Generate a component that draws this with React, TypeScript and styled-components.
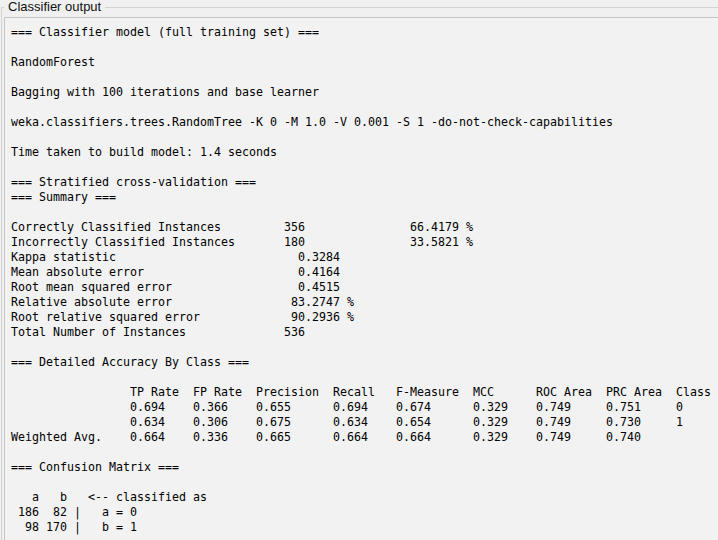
import React, { FC } from "react";
import styled, { createGlobalStyle } from "styled-components";

const GlobalStyle = createGlobalStyle`
  html, body {
    margin: 0;
    padding: 0;
    height: 540px;
    background: #f0f0f0;
    overflow: hidden;
  }
`;

const lines: string[] = [
  "=== Classifier model (full training set) ===",
  "",
  "RandomForest",
  "",
  "Bagging with 100 iterations and base learner",
  "",
  "weka.classifiers.trees.RandomTree -K 0 -M 1.0 -V 0.001 -S 1 -do-not-check-capabilities",
  "",
  "Time taken to build model: 1.4 seconds",
  "",
  "=== Stratified cross-validation ===",
  "=== Summary ===",
  "",
  "Correctly Classified Instances         356               66.4179 %",
  "Incorrectly Classified Instances       180               33.5821 %",
  "Kappa statistic                          0.3284",
  "Mean absolute error                      0.4164",
  "Root mean squared error                  0.4515",
  "Relative absolute error                 83.2747 %",
  "Root relative squared error             90.2936 %",
  "Total Number of Instances              536",
  "",
  "=== Detailed Accuracy By Class ===",
  "",
  "                 TP Rate  FP Rate  Precision  Recall   F-Measure  MCC      ROC Area  PRC Area  Class",
  "                 0.694    0.366    0.655      0.694    0.674      0.329    0.749     0.751     0",
  "                 0.634    0.306    0.675      0.634    0.654      0.329    0.749     0.730     1",
  "Weighted Avg.    0.664    0.336    0.665      0.664    0.664      0.329    0.749     0.740",
  "",
  "=== Confusion Matrix ===",
  "",
  "   a   b   <-- classified as",
  " 186  82 |   a = 0",
  "  98 170 |   b = 1",
];

const App: FC = () => {
  return (
    <>
      <GlobalStyle />
      <Panel>
        <Title>Classifier output</Title>
        <Output>{lines.join("\n")}</Output>
      </Panel>
    </>
  );
};

export default App;

const Panel = styled.fieldset`
  margin: 0 0 0 1px;
  padding: 3px 2px 0 2px;
  width: 740px;
  height: 560px;
  border: 1px solid #d3d3d3;
  box-sizing: border-box;
`;

const Title = styled.legend`
  padding: 0 4px;
  font-family: "Liberation Sans", Arial, sans-serif;
  font-size: 13px;
  line-height: 14px;
  color: #111;
`;

const Output = styled.pre`
  margin: 0;
  height: 100%;
  padding: 7px 6px 0 6px;
  border: 1px solid #c4c4c4;
  background: #f2f2f2;
  font-family: "DejaVu Sans Mono", monospace;
  font-size: 11.63px;
  line-height: 15px;
  color: #000;
  box-sizing: border-box;
  white-space: pre;
  overflow: hidden;
`;
